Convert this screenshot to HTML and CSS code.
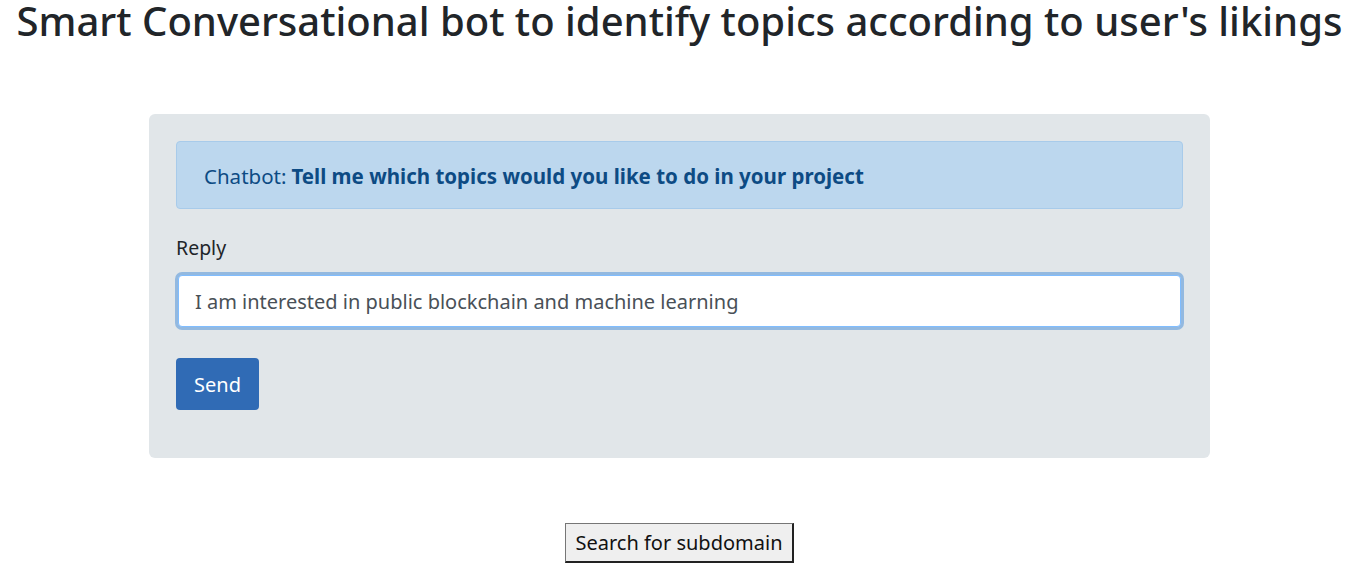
FILE: index.html
```html
<!DOCTYPE html>
<html lang="en">
<head>
    <meta charset="UTF-8"/>
    <title>Smart Conversational bot</title>
    <link rel="stylesheet" href="styles.css">
</head>
<body>
<h1 class="title">Smart Conversational bot to identify topics according to user's likings</h1>

<!--チャット部分-->
<div class="jumbotron">
    <div class="alert">
        Chatbot: <b>Tell me which topics would you like to do in your project</b>
    </div>
    <form class="reply-form">
        <label for="reply">Reply</label>
        <input id="reply" class="form-control" type="text" value="I am interested in public blockchain and machine learning">
        <button type="button" class="btn-send">Send</button>
    </form>
</div>

<div class="search">
    <button type="button" class="btn-search">Search for subdomain</button>
</div>
</body>
</html>
```

FILE: styles.css
```css
body {
    margin: 0;
    font-family: "Segoe UI", "Noto Sans", sans-serif;
    color: #212529;
    background: #fff;
}

.title {
    margin: 0;
    padding: 0 4px;
    font-size: 40px;
    font-weight: 500;
    line-height: 42px;
    text-align: center;
    white-space: nowrap;
}

.jumbotron {
    margin: 72px 149px 0;
    padding: 27px 27px 48px;
    background-color: #e1e6e9;
    border-radius: 6px;
}

.alert {
    height: 68px;
    box-sizing: border-box;
    padding: 2px 27px 0;
    display: flex;
    align-items: center;
    gap: 5px;
    background-color: #bcd7ee;
    border: 1px solid #a8cbea;
    border-radius: 4px;
    color: #0d4b84;
    font-size: 20.5px;
}

.reply-form label {
    display: block;
    margin-top: 26px;
    font-size: 19.5px;
    line-height: 26px;
}

.form-control {
    display: block;
    box-sizing: border-box;
    width: calc(100% - 4px);
    height: 52px;
    margin: 14px 2px 0;
    padding: 0 16px;
    border: 1px solid #80bdff;
    border-radius: 4px;
    box-shadow: 0 0 0 3px #93b9e0;
    font-family: inherit;
    font-size: 20px;
    color: #495057;
    outline: none;
}

.btn-send {
    display: block;
    margin-top: 31px;
    width: 83px;
    height: 52px;
    border: none;
    border-radius: 4px;
    background-color: #306bb5;
    color: #fff;
    font-family: inherit;
    font-size: 20px;
}

.search {
    margin-top: 65px;
    text-align: center;
}

.btn-search {
    width: 229px;
    height: 40px;
    padding: 0;
    background-color: #efefef;
    border: 1px solid #767676;
    border-right: 2px solid #222;
    border-bottom: 2px solid #222;
    font-family: inherit;
    font-size: 20px;
    color: #111;
}
```
